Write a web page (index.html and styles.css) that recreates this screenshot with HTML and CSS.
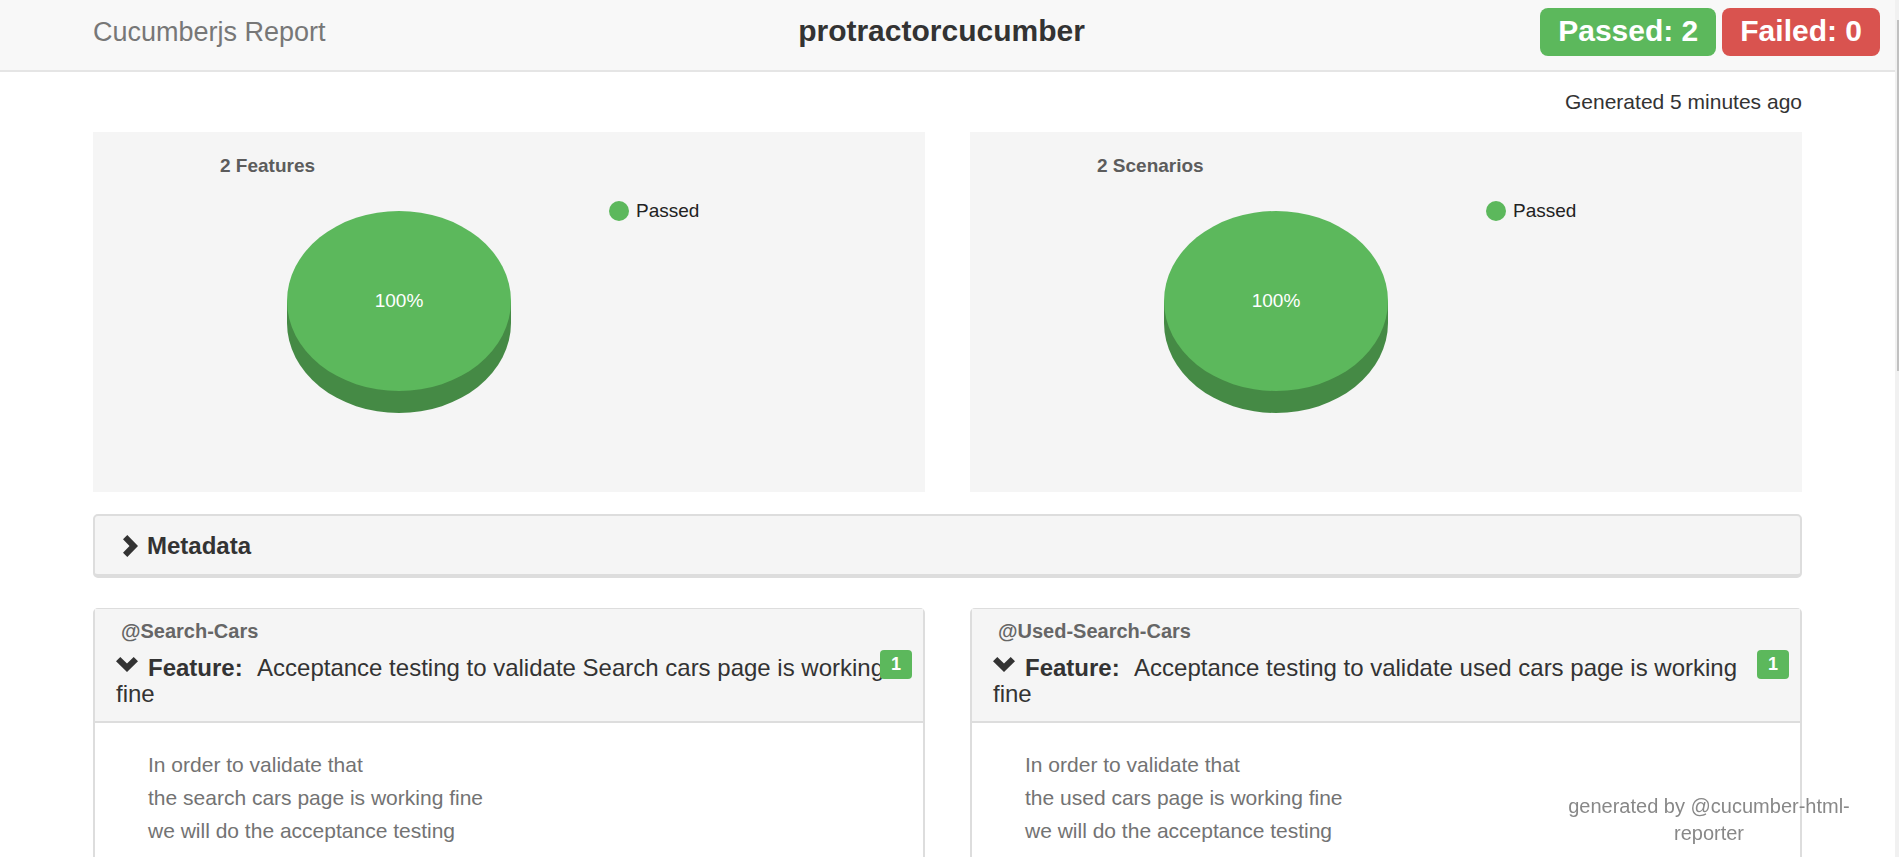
FILE: index.html
```html
<!DOCTYPE html>
<html lang="en">
<head>
<meta charset="utf-8">
<title>Cucumberjs Report</title>
<link rel="stylesheet" href="styles.css">
</head>
<body>
<div class="page">
  <header class="navbar">
    <a class="brand" href="#">Cucumberjs Report</a>
    <h1 class="project">protractorcucumber</h1>
    <div class="totals">
      <span class="label passed">Passed: 2</span>
      <span class="label failed">Failed: 0</span>
    </div>
  </header>

  <main class="container">
    <p class="generated">Generated 5 minutes ago</p>

    <div class="columns">
      <section class="chart">
        <h2 class="chart-title">2 Features</h2>
        <div class="chart-body">
          <svg class="pie" viewBox="0 0 224 202" role="img" aria-label="100% passed">
            <path class="pie-side" d="M0 90V112A112 90 0 0 0 224 112V90Z"/>
            <ellipse class="pie-top" cx="112" cy="90" rx="112" ry="90"/>
            <text class="pie-text" x="112" y="96">100%</text>
          </svg>
          <div class="legend"><span class="dot"></span>Passed</div>
        </div>
      </section>
      <section class="chart">
        <h2 class="chart-title">2 Scenarios</h2>
        <div class="chart-body">
          <svg class="pie" viewBox="0 0 224 202" role="img" aria-label="100% passed">
            <path class="pie-side" d="M0 90V112A112 90 0 0 0 224 112V90Z"/>
            <ellipse class="pie-top" cx="112" cy="90" rx="112" ry="90"/>
            <text class="pie-text" x="112" y="96">100%</text>
          </svg>
          <div class="legend"><span class="dot"></span>Passed</div>
        </div>
      </section>
    </div>

    <button class="metadata" type="button" aria-expanded="false">
      <svg class="chevron-right" viewBox="0 0 15 22" aria-hidden="true"><path d="M4.300 0L15 11L4.300 22L0 17.700L6.500 11L0 4.300Z"/></svg>
      Metadata
    </button>

    <div class="columns">
      <article class="feature">
        <div class="feature-heading">
          <p class="tag">@Search-Cars</p>
          <a class="feature-link" href="#search-cars"><svg class="chevron-down" viewBox="0 0 22 15" aria-hidden="true"><path d="M0 4.300L4.300 0L11 6.500L17.700 0L22 4.300L11 15Z"/></svg><b class="keyword">Feature:</b> Acceptance testing to validate Search cars page is working fine</a>
          <span class="count">1</span>
        </div>
        <div class="description" id="search-cars">
          <p>In order to validate that</p>
          <p>the search cars page is working fine</p>
          <p>we will do the acceptance testing</p>
        </div>
      </article>
      <article class="feature">
        <div class="feature-heading">
          <p class="tag">@Used-Search-Cars</p>
          <a class="feature-link" href="#used-cars"><svg class="chevron-down" viewBox="0 0 22 15" aria-hidden="true"><path d="M0 4.300L4.300 0L11 6.500L17.700 0L22 4.300L11 15Z"/></svg><b class="keyword">Feature:</b> Acceptance testing to validate used cars page is working fine</a>
          <span class="count">1</span>
        </div>
        <div class="description" id="used-cars">
          <p>In order to validate that</p>
          <p>the used cars page is working fine</p>
          <p>we will do the acceptance testing</p>
        </div>
      </article>
    </div>
  </main>

  <footer class="credit">generated by <a href="#">@cucumber-html-reporter</a></footer>
  <div class="scrollbar" aria-hidden="true"><div class="thumb"></div></div>
</div>
</body>
</html>
```

FILE: styles.css
```css
* {
  box-sizing: border-box;
}

body,
h1,
h2,
p {
  margin: 0;
}

body {
  background: #fff;
  color: #333;
  font-family: "Liberation Sans", Arial, sans-serif;
  font-size: 21px;
}

a {
  color: inherit;
  text-decoration: none;
}

.page {
  height: 100vh;
  overflow: hidden;
  padding-right: 4px;
}

.navbar {
  display: grid;
  grid-template-columns: 1fr auto 1fr;
  align-items: start;
  height: 72px;
  padding: 8px 15px 0;
  background: #f8f8f8;
  border-bottom: 2px solid #e5e5e5;
}

.brand {
  padding-left: 78px;
  color: #777;
  font-size: 27px;
  line-height: 48px;
}

.project {
  padding-right: 12px;
  font-size: 30px;
  line-height: 46px;
}

.totals {
  display: flex;
  justify-content: flex-end;
  gap: 6px;
}

.label {
  padding: 6px 18px 8px;
  border-radius: 8px;
  color: #fff;
  font-size: 30px;
  font-weight: bold;
  line-height: 34px;
}

.passed {
  background: #5cb85c;
}

.failed {
  background: #d9534f;
}

.container {
  padding: 0 93px;
}

.generated {
  line-height: 60px;
  text-align: right;
}

.columns {
  display: grid;
  grid-template-columns: 1fr 1fr;
  gap: 45px;
}

.chart {
  height: 360px;
  padding: 22px 0 0 127px;
  background: #f5f5f5;
}

.chart-title {
  color: #5c5c5c;
  font-size: 19px;
  line-height: 24px;
}

.chart-body {
  display: flex;
  align-items: flex-start;
  gap: 98px;
  padding: 33px 0 0 67px;
}

.pie {
  width: 224px;
  height: 202px;
}

.pie-side {
  fill: #458a45;
}

.pie-top {
  fill: #5cb85c;
}

.pie-text {
  fill: #fff;
  font-size: 19px;
  text-anchor: middle;
}

.legend {
  display: flex;
  align-items: center;
  gap: 7px;
  height: 20px;
  margin-top: -10px;
  color: #222;
  font-size: 19px;
}

.dot {
  width: 20px;
  height: 20px;
  border-radius: 50%;
  background: #5cb85c;
}

.metadata {
  display: flex;
  align-items: center;
  gap: 9px;
  width: 100%;
  margin: 22px 0 30px;
  padding: 17px 28px 15px;
  background: #f5f5f5;
  border: 2px solid #ddd;
  border-bottom-width: 4px;
  border-radius: 5px;
  color: #333;
  font: bold 24px/26px "Liberation Sans", Arial, sans-serif;
}

.chevron-right {
  width: 15px;
  height: 22px;
  fill: #333;
}

.feature {
  min-height: 300px;
  border: 2px solid #ddd;
  border-top-width: 1px;
  border-radius: 5px;
}

.feature-heading {
  position: relative;
  padding: 8px 21px 14px;
  background: #f5f5f5;
  border-bottom: 2px solid #ddd;
}

.tag {
  margin: 0 0 10px 5px;
  color: #666;
  font-size: 20px;
  font-weight: bold;
  line-height: 28px;
}

.feature-link {
  display: block;
  font-size: 24px;
  line-height: 26px;
}

.chevron-down {
  width: 22px;
  height: 15px;
  margin-right: 10px;
  vertical-align: 4px;
  fill: #333;
}

.keyword {
  margin-right: 9px;
}

.count {
  position: absolute;
  top: 41px;
  right: 11px;
  width: 32px;
  border-radius: 4px;
  background: #5cb85c;
  color: #fff;
  font-size: 18px;
  font-weight: bold;
  line-height: 29px;
  text-align: center;
}

.description {
  padding: 25px 53px;
  color: #737373;
  line-height: 33px;
}

.credit {
  position: fixed;
  right: 40px;
  bottom: 10px;
  width: 300px;
  color: #888;
  font-size: 20px;
  line-height: 27px;
  text-align: center;
}

.scrollbar {
  position: fixed;
  top: 0;
  right: 0;
  bottom: 0;
  width: 4px;
  padding: 20px 0 0 2px;
  background: #f1f1f1;
}

.thumb {
  height: 351px;
  background: #c1c1c1;
}
```
